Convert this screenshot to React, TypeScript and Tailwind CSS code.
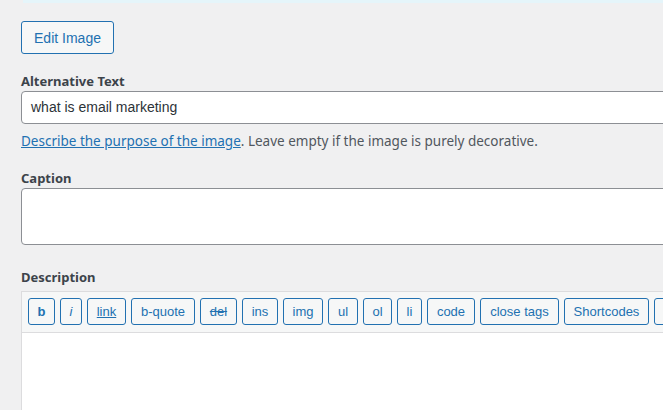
import React from "react";

const buttons: { label: string; w: string; cls?: string }[] = [
  { label: "b", w: "w-[27px]", cls: "font-bold" },
  { label: "i", w: "w-[22px]", cls: "italic" },
  { label: "link", w: "w-[39px]", cls: "underline" },
  { label: "b-quote", w: "w-[64px]" },
  { label: "del", w: "w-[37px]", cls: "line-through" },
  { label: "ins", w: "w-[36px]" },
  { label: "img", w: "w-[40px]" },
  { label: "ul", w: "w-[30px]" },
  { label: "ol", w: "w-[29px]" },
  { label: "li", w: "w-[25px]" },
  { label: "code", w: "w-[48px]" },
  { label: "close tags", w: "w-[79px]" },
  { label: "Shortcodes", w: "w-[85px]" },
  { label: "", w: "w-[50px]" },
];

const arial = { fontFamily: '"Liberation Sans", Arial, sans-serif' };

export default function App() {
  return (
    <div
      className="w-[663px] h-[410px] overflow-hidden bg-[#f0f0f1] text-[#1d2327]"
      style={{ fontFamily: '"Noto Sans", "Open Sans", sans-serif' }}
    >
      <div className="w-[900px]">
        <div className="ml-[23px] h-[3px] bg-[#e5f5fa]" />
        <div className="pl-[21px]">
          <button
            className="mt-[18px] h-[33px] w-[93px] rounded-[3px] border border-[#2271b1] bg-[#f6f7f7] text-[14px] text-[#2271b1] leading-none"
            style={arial}
          >
            Edit Image
          </button>

          <div className="mt-[17px] h-[20px] text-[13px] font-bold leading-[20px] text-[#3c434a]">
            Alternative Text
          </div>
          <div
            className="h-[33px] rounded-[4px] border border-[#8c8f94] bg-white px-[9px] text-[14px] leading-[31px] text-[#2c3338]"
            style={arial}
          >
            what is email marketing
          </div>
          <div className="mt-[7px] h-[20px] text-[13.5px] leading-[20px] text-[#50575e]">
            <span className="text-[#2271b1] underline">Describe the purpose of the image</span>
            . Leave empty if the image is purely decorative.
          </div>

          <div className="mt-[17px] h-[20px] text-[13px] font-bold leading-[20px] text-[#3c434a]">
            Caption
          </div>
          <div className="h-[57px] rounded-[4px] border border-[#8c8f94] bg-white" />

          <div className="mt-[22px] h-[20px] text-[13px] font-bold leading-[20px] text-[#3c434a]">
            Description
          </div>
          <div className="mt-[4px] border border-[#dcdcde] bg-white">
            <div
              className="flex h-[41px] items-start gap-[5px] border-b border-[#dcdcde] bg-[#f6f7f7] pl-[6px] pt-[6px]"
              style={arial}
            >
              {buttons.map((b, i) => (
                <div
                  key={i}
                  className={`flex h-[27px] shrink-0 items-center justify-center rounded-[3px] border border-[#2271b1] bg-[#f6f7f7] text-[13px] text-[#2271b1] ${b.w} ${b.cls ?? ""}`}
                >
                  {b.label}
                </div>
              ))}
            </div>
            <div className="h-[120px]" />
          </div>
        </div>
      </div>
    </div>
  );
}
